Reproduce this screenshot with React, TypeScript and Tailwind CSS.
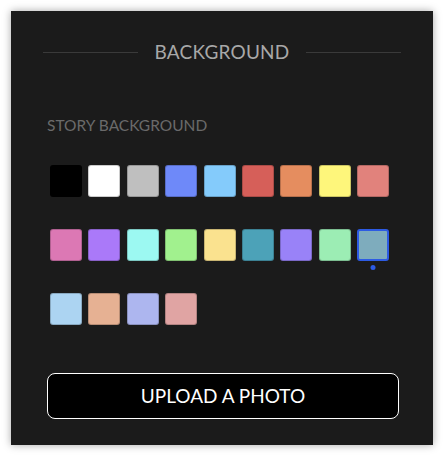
const rows: string[][] = [
    ["#000000", "#ffffff", "#bfbfbf", "#6e89f9", "#84cbfb", "#d65f59", "#e58d5f", "#fef67b", "#e1827c"],
    ["#dc78b4", "#aa79f9", "#9cf9f2", "#a1f18e", "#fae28f", "#4ca2b8", "#9982f8", "#9cedb4", "#7eacbd"],
    ["#acd4f2", "#e6b193", "#adb6ef", "#e0a4a3"],
];

const selected = "#7eacbd";

const Swatch = ({color}: { color: string }) => {
    const isSelected = color === selected;
    return (
        <div className="relative w-[32px] h-[32px]">
            <button
                className={isSelected
                    ? "w-full h-full rounded-[3px] border-2 border-[#2d5be3]"
                    : "w-full h-full rounded-[3px] border border-black/20"}
                style={{backgroundColor: color}}
            />
            {isSelected && (
                <span className="absolute left-1/2 -translate-x-1/2 top-[36px] w-[5px] h-[5px] rounded-full bg-[#2d5be3]"/>
            )}
        </div>
    );
};

const App = () => {
    return (
        <div className="w-[444px] h-[458px] bg-white pt-[11px] px-[11px] font-['Lato',sans-serif]">
            <div className="w-[422px] h-[434px] bg-[#1b1b1b] shadow-[0_0_8px_rgba(0,0,0,0.35)] flex flex-col">
                <div className="flex items-center gap-[17px] px-[32px] mt-[28px] h-[26px]">
                    <div className="flex-1 h-px bg-[#3a3a3a]"/>
                    <span className="text-[19px] text-[#a8a8a8] tracking-[0.2px]">BACKGROUND</span>
                    <div className="flex-1 h-px bg-[#3a3a3a]"/>
                </div>

                <div className="ml-[36px] mt-[50px] text-[15.5px] leading-[20px] text-[#6a6a6a]">STORY BACKGROUND</div>

                <div className="ml-[39px] mt-[30px] flex flex-col gap-[32px]">
                    {rows.map((row, i) => (
                        <div key={i} className="flex gap-[6.4px]">
                            {row.map(c => <Swatch key={c} color={c}/>)}
                        </div>
                    ))}
                </div>

                <button
                    className="ml-[36px] mt-[48px] w-[352px] h-[46px] bg-black border border-white rounded-[8px] text-white text-[19px]">
                    UPLOAD A PHOTO
                </button>
            </div>
        </div>
    );
};

export default App;
